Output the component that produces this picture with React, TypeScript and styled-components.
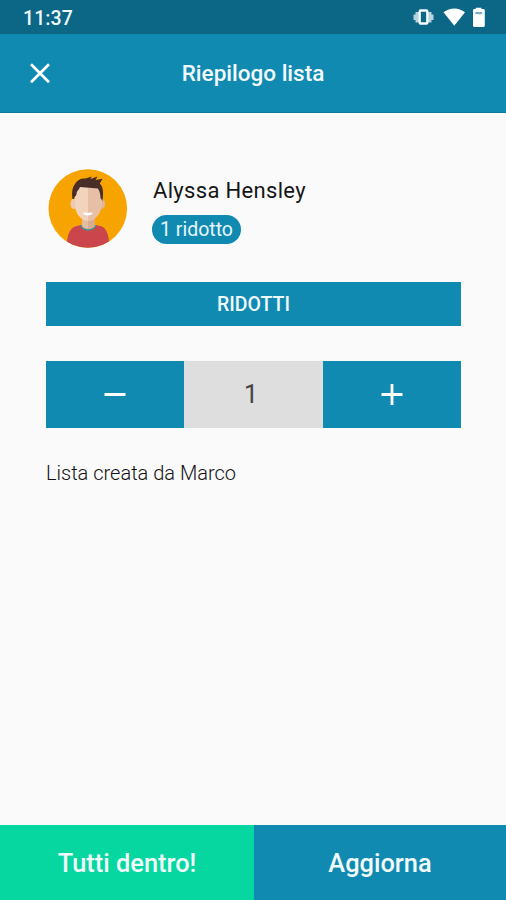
import React, { useState } from 'react';
import styled, { createGlobalStyle } from 'styled-components';

const BLUE = '#118ab2';

const GlobalStyle = createGlobalStyle`
  * { box-sizing: border-box; }
  body { margin: 0; background: #fafafa; font-family: Roboto, 'Liberation Sans', sans-serif; }
  button { border: 0; padding: 0; font-family: inherit; }
`;

const Screen = styled.div`
  width: 100%;
  height: 900px;
  display: flex;
  flex-direction: column;
  background: #fafafa;
  overflow: hidden;
`;

const StatusBar = styled.div`
  height: 34px;
  flex: none;
  display: flex;
  align-items: flex-start;
  justify-content: space-between;
  padding: 6px 20px 0 23px;
  background: #0c6685;
  color: #eef7fa;
`;

const Clock = styled.span`
  font-size: 19.5px;
  font-weight: 500;
  line-height: 26px;
  letter-spacing: 0.1px;
`;

const StatusIcons = styled.svg`
  display: block;
  width: 74px;
  height: 22px;
`;

const AppBar = styled.header`
  height: 79px;
  flex: none;
  display: grid;
  grid-template-columns: 80px 1fr 80px;
  align-items: center;
  background: ${BLUE};
  border-bottom: 1px solid #107a9e;
`;

const CloseButton = styled.button`
  height: 100%;
  display: flex;
  align-items: center;
  justify-content: center;
  background: transparent;
`;

const Title = styled.h1`
  margin: 0;
  text-align: center;
  color: #f3fafd;
  font-size: 22.5px;
  font-weight: 500;
  line-height: 28px;
`;

const Content = styled.main`
  flex: 1;
  padding: 55px 45px 0 46px;
`;

const Profile = styled.section`
  display: flex;
  height: 82px;
  padding-left: 1px;
`;

const Avatar = styled.svg`
  width: 81px;
  height: 81px;
  flex: none;
`;

const Details = styled.div`
  padding: 9px 0 0 24px;
  display: flex;
  flex-direction: column;
  align-items: flex-start;
`;

const Name = styled.div`
  padding-left: 1px;
  font-size: 22px;
  line-height: 28px;
  letter-spacing: 0.32px;
  color: #161616;
  white-space: nowrap;
`;

const Badge = styled.span`
  height: 29px;
  width: 89px;
  margin-top: 10px;
  border-radius: 15px;
  background: ${BLUE};
  color: #e8f6fb;
  font-size: 19.5px;
  line-height: 29px;
  text-align: center;
  white-space: nowrap;
`;

const SectionLabel = styled.div`
  height: 44px;
  margin-top: 32px;
  background: ${BLUE};
  color: #f0f9fc;
  font-size: 19.5px;
  font-weight: 500;
  line-height: 46px;
  text-align: center;
`;

const Stepper = styled.div`
  height: 67px;
  margin-top: 35px;
  display: grid;
  grid-template-columns: 138px 139px 138px;
  grid-template-rows: 67px;
`;

const StepButton = styled.button`
  display: flex;
  align-items: center;
  justify-content: center;
  background: ${BLUE};
`;

const Count = styled.output`
  background: #dedede;
  color: #444;
  font-size: 25px;
  line-height: 68px;
  text-align: center;
  padding-right: 5px;
`;

const Note = styled.p`
  margin: 32px 0 0;
  font-size: 20px;
  font-weight: 300;
  line-height: 26px;
  color: #111;
`;

const Footer = styled.footer`
  height: 75px;
  flex: none;
  display: grid;
  grid-template-columns: 254px 1fr;
`;

const Action = styled.button<{ $color: string }>`
  background: ${(p) => p.$color};
  color: #f1fbfb;
  font-size: 25.4px;
  font-weight: 500;
  line-height: 30px;
  padding-top: 1px;
`;

function Indicators() {
  return (
    <StatusIcons viewBox="412 6 74 22" aria-hidden="true">
      <path d="M413.500 14.500h2v-2.500h3.700v10.500h-3.700v-2.500h-2zM433.500 14.500h-2v-2.500h-3.700v10.500h3.700v-2.500h2z" fill="#b5d3df" />
      <rect x="419.700" y="10.500" width="7.600" height="13" rx="0.800" fill="none" stroke="#f7fcfd" strokeWidth="2.300" />
      <path d="M443.500 12.300C449.800 7.100 458.800 7.100 465 12.300L454.300 25.800Z" fill="#fff" />
      <path d="M475.800 9V7.700h5.600V9h2c.8 0 1.400.6 1.400 1.400v15.200c0 .7-.6 1.300-1.300 1.300h-9.200c-.7 0-1.300-.6-1.300-1.300V10.400c0-.8.6-1.400 1.400-1.400z" fill="#fff" />
      <path d="M475.300 12h7v2.200h-7z" fill="#7faebf" />
    </StatusIcons>
  );
}

function Portrait() {
  return (
    <Avatar viewBox="47 168 81 81" aria-label="Alyssa Hensley">
      <clipPath id="disc"><circle cx="87.800" cy="208.500" r="39.300" /></clipPath>
      <circle cx="87.800" cy="208.500" r="39.300" fill="#f7a400" />
      <g clipPath="url(#disc)">
        <path d="M66 250C67 239 68 229 75 226.500L81 225H96L102 226.500C108 229 109 239 110 250Z" fill="#cb454d" />
        <path d="M80 225C82 232.500 94.500 232.500 96.500 225Z" fill="#4b9293" />
        <path d="M82 213h12.500v13c-2 4-10.500 4-12.500 0z" fill="#e6bda2" />
        <path d="M88 213h6.500v13c-1.500 2.300-4 3-6.500 3z" fill="#d9ab90" />
        <ellipse cx="74" cy="203.700" rx="3.600" ry="5.300" fill="#efc9af" />
        <ellipse cx="101.700" cy="203.700" rx="3.400" ry="5.300" fill="#dfb499" />
        <path d="M75 187H101.500V205C101 213.500 95 220.500 88 221C81 220.500 75 213.500 75 205Z" fill="#f2d3bc" />
        <path d="M88 187H101.500V205C101 213.500 95 220.500 88 221Z" fill="#e6bfa6" />
        <path d="M82.500 212.700H93C91.500 216.300 84.500 216.300 82.500 212.700Z" fill="#fff" />
        <path d="M72.500 199C71.500 192 72.500 187 75 184C77 180 81 178 85 178.500C88 177.500 89.500 177.500 91.500 176.500L90.500 179L97.500 176.500L95.500 180L102.500 178.800L99.800 183.500C103.500 187 103.500 193 102.500 201L100.500 198C100.500 194 99.500 191 98 188.500L80 187C78.500 191 77 190 76.500 194C76 196.500 74.500 196 74 199Z" fill="#4a2d27" />
      </g>
    </Avatar>
  );
}

export default function App() {
  const [count, setCount] = useState(1);
  return (
    <>
      <GlobalStyle />
      <Screen>
        <StatusBar>
          <Clock>11:37</Clock>
          <Indicators />
        </StatusBar>
        <AppBar>
          <CloseButton aria-label="Chiudi">
            <svg width="24" height="24" viewBox="0 0 24 24" fill="none" stroke="#fff" strokeWidth="2.700">
              <path d="M3 3.300 21 21.300M21 3.300 3 21.300" />
            </svg>
          </CloseButton>
          <Title>Riepilogo lista</Title>
        </AppBar>
        <Content>
          <Profile>
            <Portrait />
            <Details>
              <Name>Alyssa Hensley</Name>
              <Badge>1 ridotto</Badge>
            </Details>
          </Profile>
          <SectionLabel>RIDOTTI</SectionLabel>
          <Stepper>
            <StepButton aria-label="Meno" onClick={() => setCount((n) => Math.max(0, n - 1))}>
              <svg width="24" height="24" viewBox="0 0 24 24" stroke="#fff" strokeWidth="3">
                <path d="M1.500 11.500H22.500" />
              </svg>
            </StepButton>
            <Count>{count}</Count>
            <StepButton aria-label="Più" onClick={() => setCount((n) => n + 1)}>
              <svg width="24" height="24" viewBox="0 0 24 24" stroke="#fff" strokeWidth="2.800">
                <path d="M1.500 11.500H22.500M12 1V22" />
              </svg>
            </StepButton>
          </Stepper>
          <Note>Lista creata da Marco</Note>
        </Content>
        <Footer>
          <Action $color="#06d6a0">Tutti dentro!</Action>
          <Action $color={BLUE}>Aggiorna</Action>
        </Footer>
      </Screen>
    </>
  );
}
